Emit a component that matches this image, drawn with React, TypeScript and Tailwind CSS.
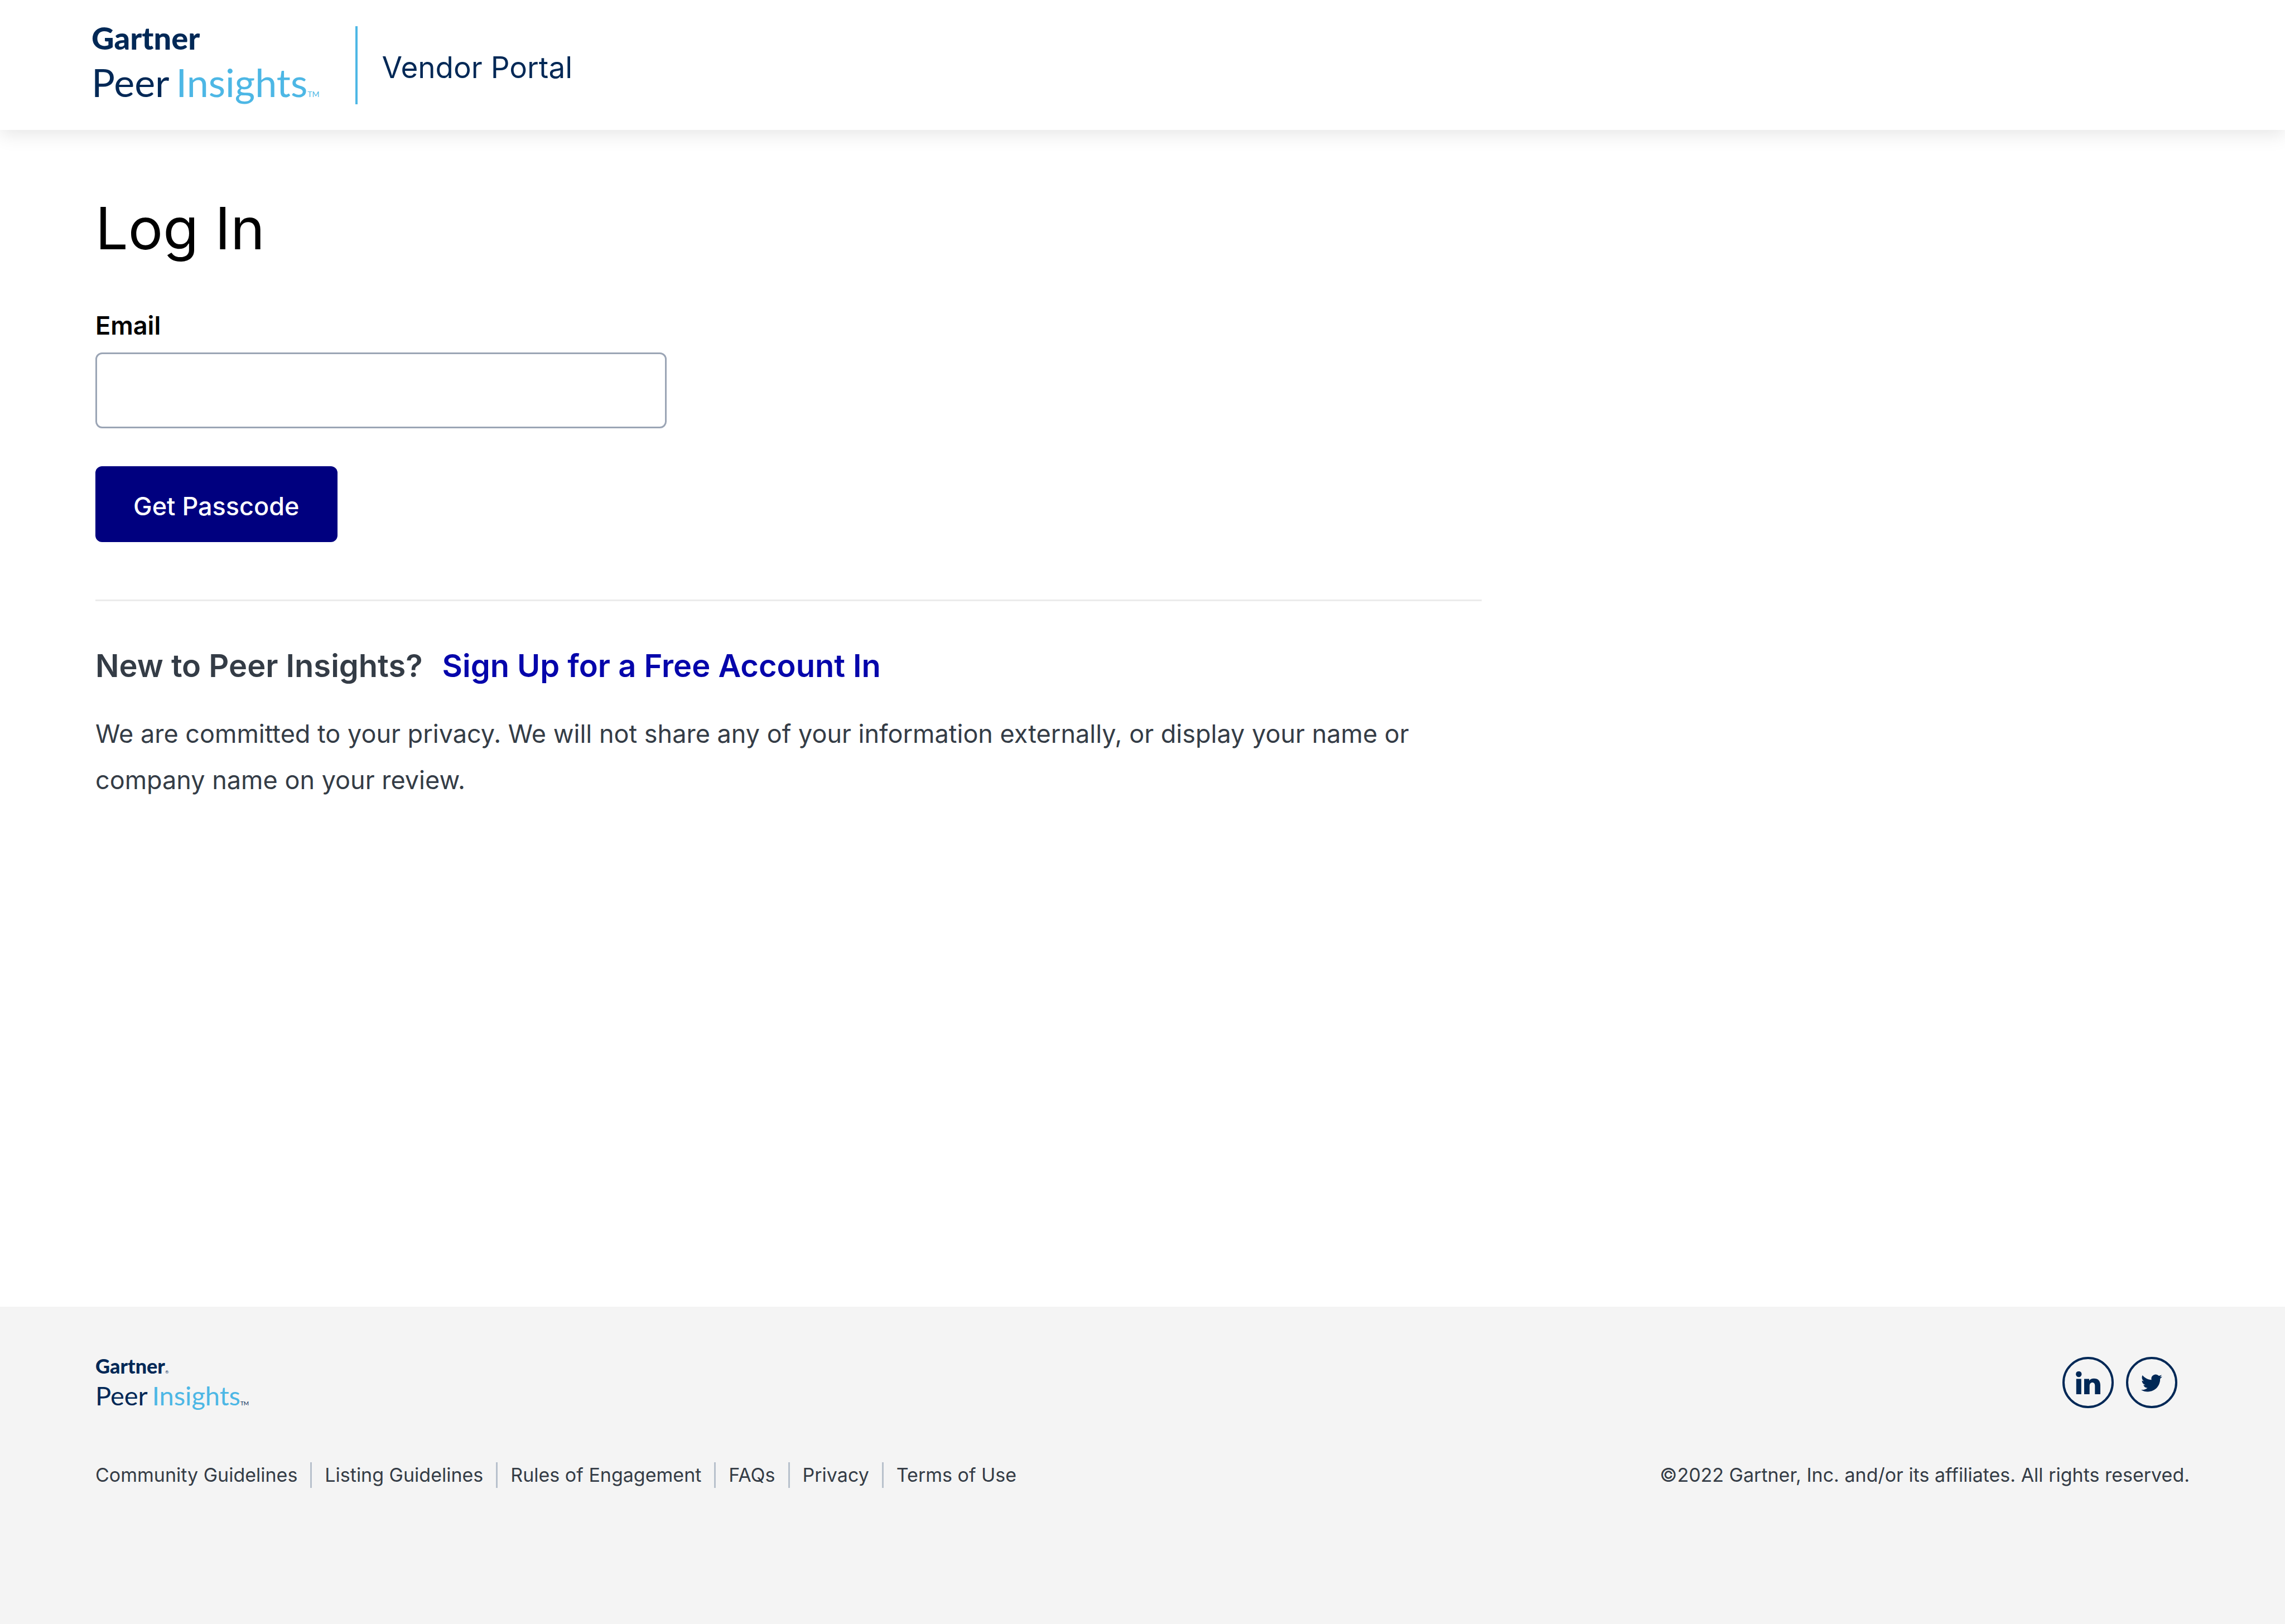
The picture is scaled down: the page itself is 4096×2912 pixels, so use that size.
import React, { useState } from 'react';

const footerLinks = [
  'Community Guidelines',
  'Listing Guidelines',
  'Rules of Engagement',
  'FAQs',
  'Privacy',
  'Terms of Use',
];

const HeaderLogo: React.FC = () => (
  <a href="#" className="flex flex-col font-['Lato',sans-serif] text-[#002856]">
    <span className="text-[56px] leading-[60px] font-black">Gartner</span>
    <span className="flex items-baseline text-[70px] leading-[98px]">
      <span>Peer</span>
      <span className="ml-3 text-[#4db7e5]">Insights</span>
      <span className="text-[14px] leading-4 text-[#4db7e5]">TM</span>
    </span>
  </a>
);

const FooterLogo: React.FC = () => (
  <a href="#" className="flex flex-col font-['Lato',sans-serif] text-[#002856]">
    <span className="flex items-baseline text-[36px] leading-9 font-black">
      Gartner<span className="text-[8px] leading-3 font-normal">®</span>
    </span>
    <span className="flex items-baseline text-[47px] leading-[70px]">
      <span>Peer</span>
      <span className="ml-2 text-[#4db7e5]">Insights</span>
      <span className="text-[10px] leading-3">TM</span>
    </span>
  </a>
);

const SocialLink: React.FC<{ label: string; children: React.ReactNode }> = ({ label, children }) => (
  <a
    href="#"
    aria-label={label}
    className="flex size-[92px] items-center justify-center rounded-full border-4 border-[#002856] text-[#002856]"
  >
    {children}
  </a>
);

const App: React.FC = () => {
  const [email, setEmail] = useState('');

  return (
    <div className="flex min-h-screen flex-col bg-white font-['Inter','Liberation_Sans',sans-serif] text-[#343c46]">
      {/* Header */}
      <header className="flex items-start px-[164px] pt-[38px] pb-[37px] shadow-[0_8px_32px_rgba(0,0,0,0.1)]">
        <HeaderLogo />
        <div className="mt-[9px] ml-16 flex h-[140px] items-center border-l-4 border-[#4db7e5] pl-[44px]">
          <span className="pt-2 text-[53px] leading-[64px] text-[#002856]">Vendor Portal</span>
        </div>
      </header>

      {/* Login form */}
      <main className="flex-1 px-[171px] pt-[112px] pb-16">
        <div className="max-w-[2485px]">
          <h1 className="text-[104px] leading-[128px] text-black">Log In</h1>
          <form onSubmit={(e) => e.preventDefault()} className="mt-[83px] flex flex-col items-start">
            <label htmlFor="email" className="text-[45px] leading-[56px] font-semibold text-black">Email</label>
            <input
              id="email"
              type="email"
              value={email}
              onChange={(e) => setEmail(e.target.value)}
              className="mt-5 h-[136px] w-[1024px] rounded-xl border-3 border-[#9ba5b5] px-10 text-[45px] outline-none"
            />
            <button
              type="submit"
              className="mt-[68px] h-[136px] rounded-xl bg-[#00007f] px-[68px] pt-2 text-[45px] font-medium text-white"
            >
              Get Passcode
            </button>
          </form>

          <hr className="mt-[103px] border-t-3 border-[#ebebeb]" />

          <h2 className="mt-[80px] flex gap-[35px] text-[56px] leading-[72px] font-semibold">
            New to Peer Insights?
            <a href="#" className="text-[#0505ab]">Sign Up for a Free Account In</a>
          </h2>
          <p className="mt-[44px] text-[45px] leading-[83px]">
            We are committed to your privacy. We will not share any of your information externally, or display your name or company name on your review.
          </p>
        </div>
      </main>

      {/* Footer */}
      <footer className="bg-[#f4f4f4] px-[171px] pt-[88px] pb-[244px]">
        <div className="flex items-start justify-between">
          <FooterLogo />
          <div className="mt-[2px] flex gap-[22px] pr-[22px]">
            <SocialLink label="LinkedIn">
              <svg viewBox="0 0 44 41" className="h-[41px] w-[44px]" fill="currentColor">
                <circle cx="5.3" cy="5" r="5.2" />
                <path d="M.8 13.5h9V41h-9zM15 13.5h9v3.200c1.600-2.500 4.600-4 8.300-4 8 0 11.700 4.600 11.700 12.300v16h-9.700V26c0-3.800-1.500-6-4.600-6s-5 2.200-5 6v15H15z" />
              </svg>
            </SocialLink>
            <SocialLink label="Twitter">
              <svg viewBox="0 0 24 20" className="mt-[2px] h-[32px] w-[38px]" fill="currentColor">
                <path d="M23.95 2.57a10 10 0 0 1-2.82.78 4.96 4.96 0 0 0 2.16-2.73c-.95.56-2 .96-3.13 1.19a4.92 4.92 0 0 0-8.38 4.48C7.69 6.1 4.07 4.13 1.64 1.16a4.82 4.82 0 0 0-.67 2.48c0 1.71.87 3.21 2.19 4.1a4.9 4.9 0 0 1-2.23-.62v.06a4.92 4.92 0 0 0 3.95 4.83 5 5 0 0 1-2.21.08 4.94 4.94 0 0 0 4.6 3.42A9.87 9.87 0 0 1 0 17.54a13.99 13.99 0 0 0 7.56 2.21c9.05 0 14-7.5 14-13.98 0-.21 0-.42-.02-.63a9.94 9.94 0 0 0 2.41-2.57z" />
              </svg>
            </SocialLink>
          </div>
        </div>

        <div className="mt-[85px] flex items-center justify-between text-[34px] leading-[46px]">
          <nav className="flex">
            {footerLinks.map((label) => (
              <a
                key={label}
                href="#"
                className="mr-[23px] border-r-3 border-[#b8c1cc] pr-[23px] last:mr-0 last:border-r-0 last:pr-0"
              >
                {label}
              </a>
            ))}
          </nav>
          <p>©2022 Gartner, Inc. and/or its affiliates. All rights reserved.</p>
        </div>
      </footer>
    </div>
  );
};

export default App;
